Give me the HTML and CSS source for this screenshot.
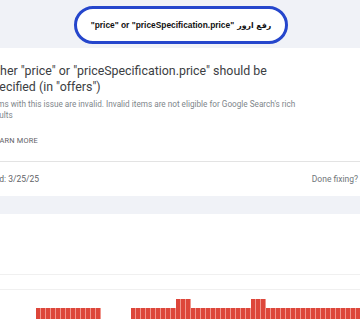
FILE: index.html
```html
<!DOCTYPE html>
<html lang="en">
<head>
  <meta charset="UTF-8" />
  <meta name="viewport" content="width=device-width, initial-scale=1.0"/>
  <title>Issue details</title>
  <link rel="stylesheet" href="styles.css">
</head>
<body>
  <div class="top">
    <div class="pill" dir="rtl"><span class="fa">رفع ارور</span> "price" or "priceSpecification.price"</div>
  </div>

  <div class="card">
    <div class="card-body">
      <h2 class="issue-title">Either "price" or "priceSpecification.price" should be specified (in "offers")</h2>
      <p class="issue-desc">Items with this issue are invalid. Invalid items are not eligible for Google Search's rich results</p>
      <a class="learn-more" href="#">Learn more</a>
    </div>
    <div class="card-footer">
      <span class="detected">First detected: 3/25/25</span>
      <span class="done">Done fixing?</span>
    </div>
  </div>

  <div class="band"></div>

  <div class="chart">
    <div class="gridline first"></div>
    <div class="gridline"></div>
    <div class="bars">
      <div class="bar"></div><div class="bar"></div><div class="bar"></div><div class="bar"></div><div class="bar"></div>
      <div class="bar"></div><div class="bar"></div><div class="bar"></div><div class="bar"></div><div class="bar"></div>
      <div class="bar"></div><div class="bar"></div><div class="bar"></div>
      <div class="bar empty"></div><div class="bar empty"></div><div class="bar empty"></div>
      <div class="bar empty"></div><div class="bar empty"></div><div class="bar empty"></div>
      <div class="bar"></div><div class="bar"></div><div class="bar"></div><div class="bar"></div><div class="bar"></div>
      <div class="bar"></div><div class="bar"></div><div class="bar"></div><div class="bar"></div>
      <div class="bar tall"></div><div class="bar tall"></div><div class="bar tall"></div>
      <div class="bar"></div><div class="bar"></div><div class="bar"></div><div class="bar"></div><div class="bar"></div><div class="bar"></div>
      <div class="bar"></div><div class="bar"></div><div class="bar"></div><div class="bar"></div><div class="bar"></div><div class="bar"></div>
      <div class="bar tall"></div><div class="bar tall"></div><div class="bar tall"></div>
      <div class="bar"></div><div class="bar"></div><div class="bar"></div><div class="bar"></div><div class="bar"></div>
      <div class="bar"></div><div class="bar"></div><div class="bar"></div><div class="bar"></div><div class="bar"></div>
      <div class="bar"></div><div class="bar"></div><div class="bar"></div><div class="bar"></div><div class="bar"></div>
      <div class="bar"></div><div class="bar"></div><div class="bar"></div><div class="bar"></div>
    </div>
  </div>
</body>
</html>
```

FILE: styles.css
```css
* {
  box-sizing: border-box;
}

html, body {
  margin: 0;
  padding: 0;
  overflow: hidden;
}

body {
  font-family: Roboto, 'Liberation Sans', Arial, sans-serif;
  background: #fff;
  width: 360px;
  height: 320px;
}

.top {
  background: #f0f2f7;
  height: 48px;
  display: flex;
  justify-content: center;
  padding-top: 6px;
}

.pill {
  width: 214px;
  height: 38px;
  margin-left: 2px;
  border: 3px solid #2546cc;
  border-radius: 19px;
  background: #fff;
  display: flex;
  align-items: center;
  justify-content: center;
  gap: 3px;
  font-family: 'Liberation Sans', 'DejaVu Sans', sans-serif;
  font-weight: 700;
  font-size: 8.4px;
  color: #111;
  white-space: nowrap;
}

.pill .fa {
  font-family: 'DejaVu Sans', sans-serif;
  font-size: 7.8px;
}

.card {
  background: #fff;
  margin-left: -14px;
  overflow: hidden;
}

.card-body {
  padding: 15px 2px 0 0;
  height: 114px;
  border-bottom: 1px solid #e3e3e3;
}

.issue-title {
  margin: 0;
  font-size: 12.4px;
  line-height: 15.5px;
  font-weight: 400;
  color: #3c4043;
  width: 310px;
}

.issue-desc {
  margin: 5px 0 0;
  padding-left: 2px;
  font-size: 8.2px;
  line-height: 10.5px;
  color: #80868b;
  width: 316px;
}

.learn-more {
  display: inline-block;
  margin: 16px 0 0 5px;
  font-size: 7.4px;
  letter-spacing: 0.2px;
  text-transform: uppercase;
  color: #5f6368;
  text-decoration: none;
}

.card-footer {
  display: flex;
  justify-content: space-between;
  align-items: center;
  height: 34px;
  padding-right: 2px;
  font-size: 8.5px;
  color: #70757a;
}

.detected {
  margin-left: -34px;
  color: #5f6368;
}

.band {
  background: #f0f2f7;
  height: 18px;
}

.chart {
  height: 105px;
  overflow: hidden;
  padding-left: 36px;
}

.gridline {
  margin-left: -36px;
  border-top: 1px solid #f0f0f0;
  margin-top: 14px;
}

.gridline.first {
  margin-top: 60px;
}

.bars {
  display: flex;
  align-items: flex-end;
  height: 20px;
  margin-top: 9px;
}

.bar {
  flex: 0 0 5px;
  height: 11px;
  background: #dd463a;
  border-right: 1px solid #f0968d;
}

.bar.tall {
  height: 20px;
}

.bar.empty {
  visibility: hidden;
}
```
